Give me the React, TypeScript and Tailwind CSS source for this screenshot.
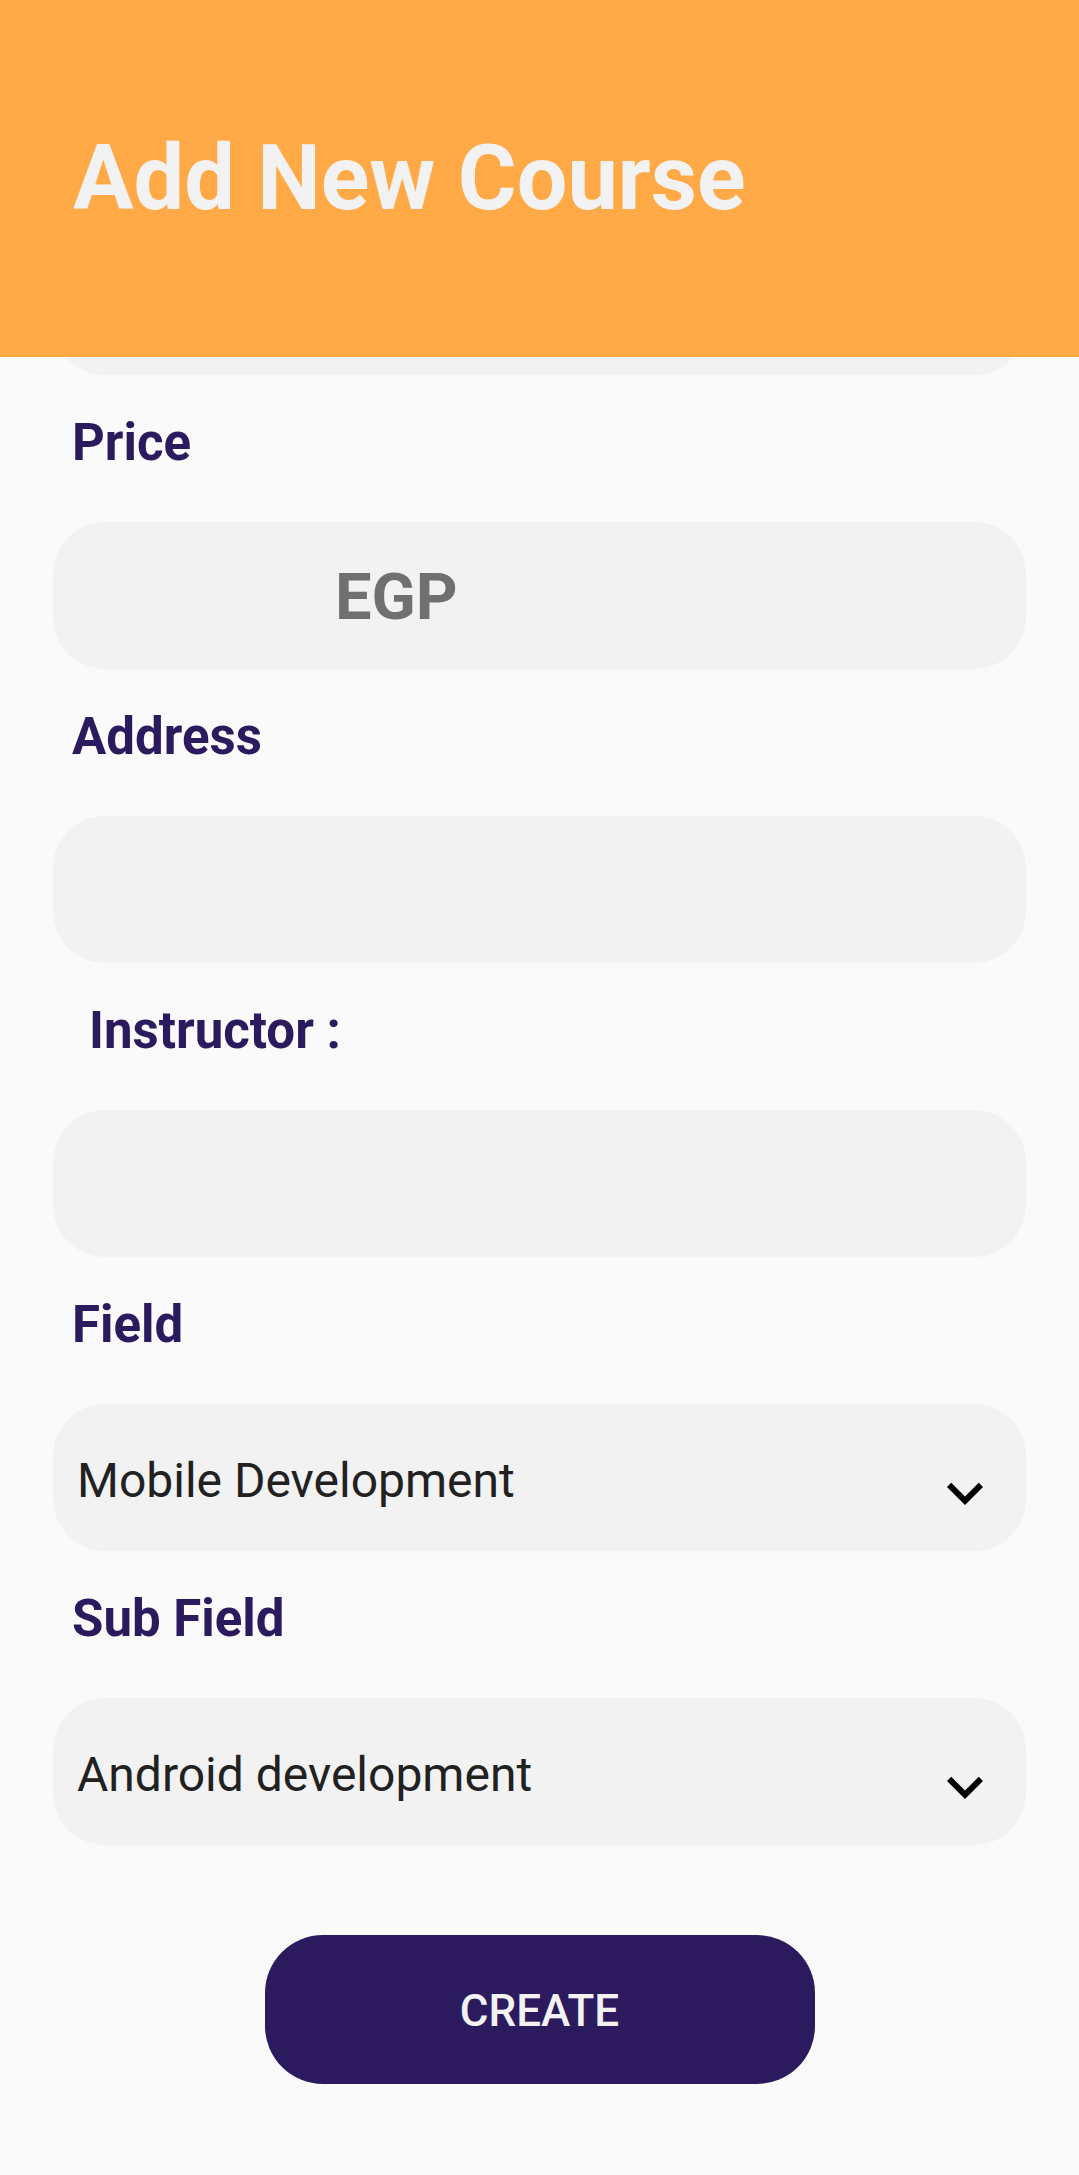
const ChevronDown = () => (
    <svg
        className="w-[72px] h-[72px] translate-y-[15px] shrink-0"
        viewBox="0 0 24 24"
        fill="#000">
        <path d="M16.59 8.59L12 13.17 7.41 8.59 6 10l6 6 6-6z" />
    </svg>
)

const Label = ({ text, indent }: { text: string; indent?: boolean }) => (
    <p className={`mt-[41px] h-[52px] text-[51px] leading-none font-bold text-[#2b1b5e] pt-[1px] ${indent ? "pl-[89px]" : "pl-[72px]"}`}>
        {text}
    </p>
)

const Input = ({ children }: { children?: React.ReactNode }) => (
    <div className="mt-[54px] mx-[53px] h-[147px] rounded-[52px] bg-[#f2f2f2] flex items-center">
        {children}
    </div>
)

const Dropdown = ({ value }: { value: string }) => (
    <div className="mt-[54px] mx-[53px] h-[147px] rounded-[52px] bg-[#f2f2f2] flex items-center justify-between pl-[24px] pr-[25px]">
        <span className="text-[48px] text-[#212121] translate-y-[3px]">{value}</span>
        <ChevronDown />
    </div>
)

export default function App() {
    return (
        <div
            className="w-[1079px] h-[2175px] bg-[#fafafa] flex flex-col overflow-hidden"
            style={{ fontFamily: "Roboto, 'Noto Sans', sans-serif" }}>
            <div className="h-[357px] shrink-0 bg-[#ffa947] pl-[73px] pt-[134px]">
                <h1 className="text-[90px] leading-none font-bold text-[#f2f2f2]">Add New Course</h1>
            </div>
            <div className="flex-1 overflow-hidden flex flex-col">
                <div className="-mt-[129px] mx-[53px] h-[147px] shrink-0 rounded-[52px] bg-[#f2f2f2]" />
                <Label text="Price" />
                <Input>
                    <span className="pl-[282px] text-[65px] font-bold text-[#707070] translate-y-[2px]">EGP</span>
                </Input>
                <Label text="Address" />
                <Input />
                <Label text="Instructor :" indent />
                <Input />
                <Label text="Field" />
                <Dropdown value="Mobile Development" />
                <Label text="Sub Field" />
                <Dropdown value="Android development" />
                <div className="flex justify-center mt-[90px]">
                    <button className="w-[550px] h-[149px] rounded-[58px] bg-[#2b1b5e] text-[#f2f2f2] text-[44px] font-medium uppercase pt-[3px]">
                        Create
                    </button>
                </div>
            </div>
        </div>
    )
}
